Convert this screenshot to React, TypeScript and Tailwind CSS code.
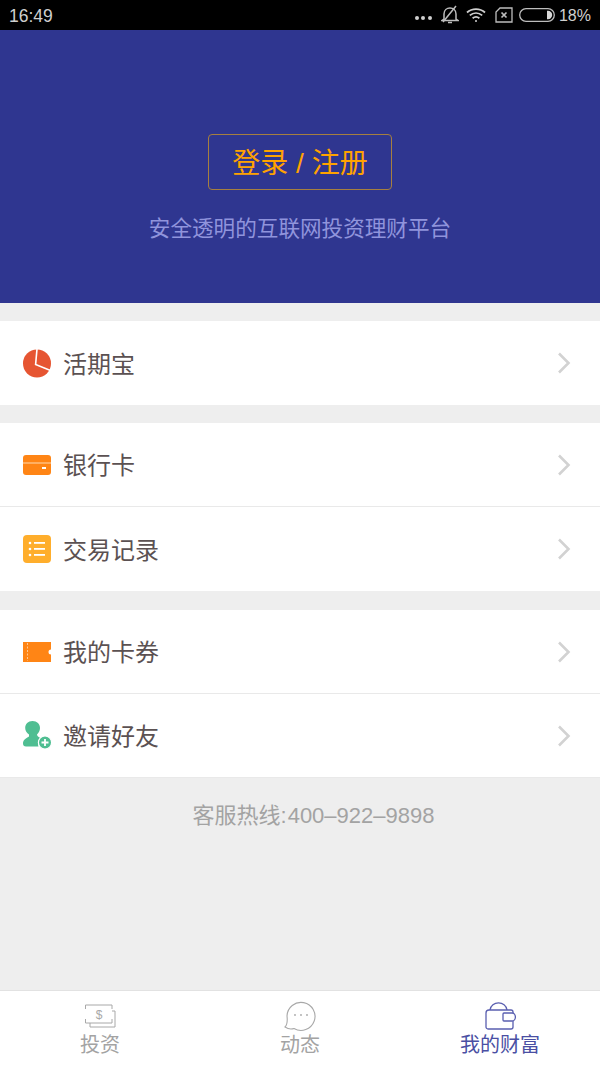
import { ReactNode } from 'react';

const stack = '"Liberation Sans", "Noto Sans CJK SC", sans-serif';

function Chevron() {
  return (
    <svg width="14" height="22" viewBox="0 0 14 22" fill="none" stroke="#d2d2d2" strokeWidth="2.6">
      <path d="M2 1.5 L11.5 11 L2 20.5" />
    </svg>
  );
}

function Row({ icon, label, border, lift }: { icon: ReactNode; label: string; border?: boolean; lift?: boolean }) {
  return (
    <div className={`flex h-[84px] items-center bg-white pl-[23px] pr-[29px] ${border ? 'border-b border-[#e9e9e9]' : ''}`}>
      <div className="flex w-[40px] shrink-0 items-center">{icon}</div>
      <span className={`flex-1 text-[24px] leading-none text-[#5b5152] ${lift ? 'mt-[2px]' : 'mt-[4px]'}`}>{label}</span>
      <Chevron />
    </div>
  );
}

const PieIcon = (
  <svg width="28" height="29" viewBox="0 0 28 29">
    <circle cx="14" cy="14.5" r="14" fill="#e65532" />
    <path d="M14 0 L12.6 15.6 L27.5 21.5" fill="none" stroke="#fff" strokeWidth="1.6" />
  </svg>
);

const CardIcon = (
  <svg width="28" height="20" viewBox="0 0 28 20">
    <rect width="28" height="20" rx="3" fill="#ff8515" />
    <rect y="7.5" width="28" height="1" fill="#ffd9b0" />
    <rect x="19" y="12" width="4" height="2" fill="#fff" />
  </svg>
);

const ListIcon = (
  <svg width="28" height="28" viewBox="0 0 28 28">
    <rect width="28" height="28" rx="4" fill="#ffae2c" />
    <g fill="#fff">
      <circle cx="7" cy="8" r="1.3" />
      <circle cx="7" cy="14" r="1.3" />
      <circle cx="7" cy="20" r="1.3" />
      <rect x="11" y="7" width="11" height="1.8" />
      <rect x="11" y="13" width="11" height="1.8" />
      <rect x="11" y="19" width="11" height="1.8" />
    </g>
  </svg>
);

const TicketIcon = (
  <svg width="28" height="20" viewBox="0 0 28 20">
    <path d="M0 0 H28 V7.5 A2.5 2.5 0 0 0 28 12.5 V20 H0 Z" fill="#ff8515" />
    <path d="M4.5 1 V19" stroke="#ffc690" strokeWidth="1" strokeDasharray="2 1.5" />
  </svg>
);

const FriendIcon = (
  <svg width="29" height="29" viewBox="0 0 29 29">
    <path d="M9.5 0 C14 0 17 3 17 7 C17 10 15.5 12 14 13.5 C14 15 15.5 16 17.5 17 C15 19 14.5 22 15.5 25.5 H3 C1 25.5 0 24.5 0 22.5 C0 19 2.5 17.5 6 15.5 L6 13.5 C3.8 12 2.2 10 2.2 7 C2.2 3 5 0 9.5 0 Z" fill="#4fbe92" />
    <circle cx="22" cy="21.5" r="6.6" fill="#4fbe92" stroke="#fff" strokeWidth="1.2" />
    <path d="M18.5 21.5 H25.5 M22 18 V25" stroke="#fff" strokeWidth="1.8" />
  </svg>
);

function StatusBar() {
  return (
    <div className="flex h-[30px] items-center justify-between bg-black pl-[9px] pr-[9px] text-[#cfcfcf]">
      <span className="mt-[3px] text-[17.5px] leading-none">16:49</span>
      <div className="flex items-center">
        <div className="mr-[9px] mt-[5px] flex gap-[2.5px]">
          <i className="h-1 w-1 rounded-full bg-[#cfcfcf]" />
          <i className="h-1 w-1 rounded-full bg-[#cfcfcf]" />
          <i className="h-1 w-1 rounded-full bg-[#cfcfcf]" />
        </div>
        <svg width="18" height="20" viewBox="0 0 18 20" fill="none" stroke="#bdbdbd" strokeWidth="1.5" className="mr-[7px]">
          <path d="M3 14 V9 C3 5 6 3 9 3 C12 3 15 5 15 9 V14 L17 15.5 H1 Z" />
          <path d="M7 17.5 H11 M2 17 L15 1" />
        </svg>
        <svg width="20" height="16" viewBox="0 0 20 16" fill="none" stroke="#cfcfcf" strokeWidth="1.8" className="mr-[9px]">
          <path d="M1 5.5 C6 1 14 1 19 5.5 M3.8 8.4 C7.5 5.3 12.5 5.3 16.2 8.4 M6.6 11.2 C8.6 9.6 11.4 9.6 13.4 11.2" />
          <circle cx="10" cy="14" r="1" fill="#cfcfcf" stroke="none" />
        </svg>
        <svg width="18" height="16" viewBox="0 0 18 16" fill="none" stroke="#bdbdbd" strokeWidth="1.3" className="mr-[6px]">
          <path d="M5 1 H17 V15 H1 V5 Z" />
          <path d="M6.5 5.5 L11.5 10.5 M11.5 5.5 L6.5 10.5" strokeWidth="1.7" />
        </svg>
        <svg width="36" height="14" viewBox="0 0 36 14" fill="none" className="mr-[4px]">
          <rect x="0.7" y="0.7" width="34.6" height="12.6" rx="6.3" stroke="#bdbdbd" strokeWidth="1.3" />
          <path d="M28 2.8 H29 A4.2 4.2 0 0 1 29 11.2 H28 Z" fill="#d8d8d8" />
        </svg>
        <span className="mt-[2px] text-[16px] leading-none">18%</span>
      </div>
    </div>
  );
}

function Tab({ icon, label, active }: { icon: ReactNode; label: string; active?: boolean }) {
  return (
    <div className="flex flex-1 flex-col items-center pt-[10px]">
      <div className="flex h-[30px] items-center justify-center">{icon}</div>
      <span className={`mt-[2px] text-[20px] leading-[24px] ${active ? 'text-[#4a4fa3]' : 'text-[#a3a3a3]'}`}>{label}</span>
    </div>
  );
}

export default function App() {
  return (
    <div className="flex h-[1067px] w-[600px] flex-col overflow-hidden bg-[#eeeeee]" style={{ fontFamily: stack }}>
      <StatusBar />

      <div className="flex h-[273px] flex-col items-center bg-[#2f3690] pt-[104px]">
        <div className="flex h-[56px] w-[184px] items-center justify-center rounded-[4px] border border-[#a67f3f] pt-[4px] text-[28px] leading-none whitespace-pre text-[#ffa200]">
          登录 / 注册
        </div>
        <p className="mt-[24px] text-[21.6px] leading-[30px] text-[#9094dc]">安全透明的互联网投资理财平台</p>
      </div>

      <div className="mt-[18px]">
        <Row icon={PieIcon} label="活期宝" />
      </div>

      <div className="mt-[18px]">
        <Row icon={CardIcon} label="银行卡" border lift />
        <Row icon={ListIcon} label="交易记录" />
      </div>

      <div className="mt-[19px]">
        <Row icon={TicketIcon} label="我的卡券" border lift />
        <Row icon={FriendIcon} label="邀请好友" border lift />
      </div>

      <div className="flex-1 pl-[27px] pt-[23px] text-center text-[22px] leading-[30px] text-[#a3a3a3]">
        客服热线:<span className="ml-[1px]">400–922–9898</span>
      </div>

      <div className="flex h-[77px] border-t border-[#e2e2e2] bg-white">
        <Tab
          label="投资"
          icon={
            <svg width="31" height="24" viewBox="0 0 31 24" fill="none" stroke="#a8a8a8" strokeWidth="1">
              <path d="M3 1 H25 M3 19 H25 M0.5 1 V5 M0.5 15 V19 M27 1 V5 M27 15 V19 M0.5 1 H3 M0.5 19 H3 M25 1 H27 M25 19 H27" />
              <path d="M5 19 V23 H30 V7 H27" />
              <text x="14" y="15" fontSize="12" textAnchor="middle" fill="#a8a8a8" stroke="none" fontFamily="Liberation Sans">$</text>
            </svg>
          }
        />
        <Tab
          label="动态"
          icon={
            <svg width="32" height="30" viewBox="0 0 32 30" fill="none" stroke="#a8a8a8" strokeWidth="1.1">
              <path d="M3 15 A14 14 0 1 1 10 27.5 C7 28.5 4 28 1 26 C3 24 3.6 20 3 15 Z" />
              <circle cx="11" cy="14" r="0.9" fill="#a8a8a8" stroke="none" />
              <circle cx="17" cy="14" r="0.9" fill="#a8a8a8" stroke="none" />
              <circle cx="23" cy="14" r="0.9" fill="#a8a8a8" stroke="none" />
            </svg>
          }
        />
        <Tab
          active
          label="我的财富"
          icon={
            <svg width="31" height="28" viewBox="0 0 31 28" fill="none" stroke="#5a5fb0" strokeWidth="1.3">
              <path d="M28 19 V25 A2 2 0 0 1 26 27 H3 A2 2 0 0 1 1 25 V11 A3 3 0 0 1 4 8 H26 A2 2 0 0 1 28 10 V11" />
              <path d="M5 8 C6 -1.5 21 -1.5 22 8" />
              <path d="M19 11 H27 A3.4 4 0 0 1 27 19 H19 A1 1 0 0 1 18 18 V12 A1 1 0 0 1 19 11 Z" />
            </svg>
          }
        />
      </div>
    </div>
  );
}
